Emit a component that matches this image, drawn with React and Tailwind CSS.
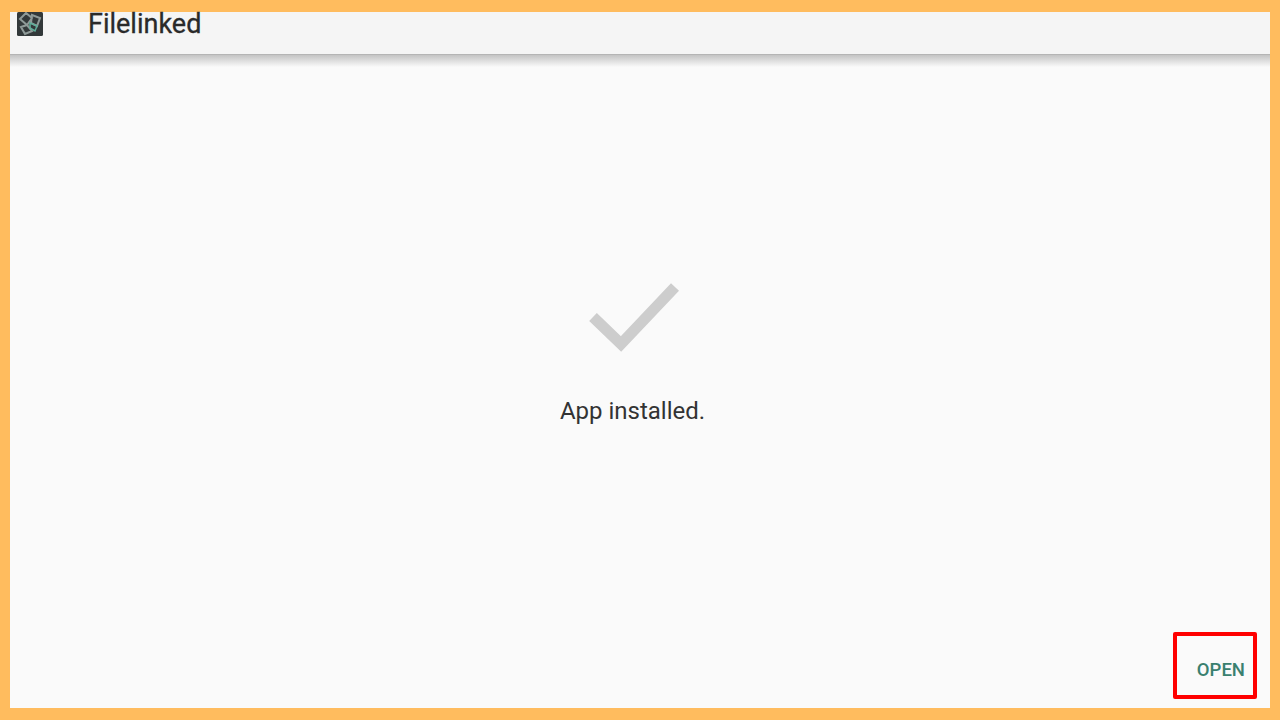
export default function App() {
  return (
    <div className="h-screen w-full overflow-hidden bg-[#ffbc5e] px-[10px] py-[12px] font-['Roboto',sans-serif]">
      <div className="relative flex h-full flex-col bg-[#fafafa]">
        {/* App bar */}
        <header className="flex h-[43px] shrink-0 items-start border-b border-[#b5b5b5] bg-[#f5f5f5] pl-[7px]">
          <svg width="26" height="24" viewBox="0 0 26 24" className="shrink-0">
            <rect width="26" height="24" rx="1.5" fill="#33393a" />
            <path d="M3 7l6-6 6 5-5 7zM15 3l8 3-3 8-6-3zM4 15l6-2 5 6-7 3z" fill="none" stroke="#8f9a98" strokeWidth="2" />
            <path d="M13 11l7 3-2 5-5-3z" fill="none" stroke="#5fae9a" strokeWidth="1.5" />
          </svg>
          <span className="ml-[45px] text-[27px] leading-[24px] text-[#2a2a2a] [-webkit-text-stroke:0.3px_#2a2a2a]">Filelinked</span>
        </header>
        <div className="h-[12px] shrink-0 bg-gradient-to-b from-[#c4c4c4] to-[#fafafa]" />

        {/* Installed message */}
        <main className="flex flex-1 flex-col items-center pt-[215px] pr-[15px]">
          <svg width="92" height="72" viewBox="0 0 92 72" className="ml-[2px] shrink-0">
            <path d="M5 35l28 27L87 5" fill="none" stroke="#cdcdcd" strokeWidth="11" />
          </svg>
          <p className="mt-[43px] text-[24px] leading-[28px] text-[#333333]">App installed.</p>
        </main>

        {/* Action */}
        <div className="flex h-[76px] shrink-0 items-center justify-end pr-[25px] pb-[1px]">
          <span className="text-[18.5px] leading-[24px] font-medium text-[#39806f]">OPEN</span>
        </div>

        {/* Red highlight drawn over the screenshot */}
        <div className="absolute right-[13px] bottom-[9px] h-[67px] w-[84px] rounded-[2px] border-[4px] border-[#ff0000]" />
      </div>
    </div>
  );
}
